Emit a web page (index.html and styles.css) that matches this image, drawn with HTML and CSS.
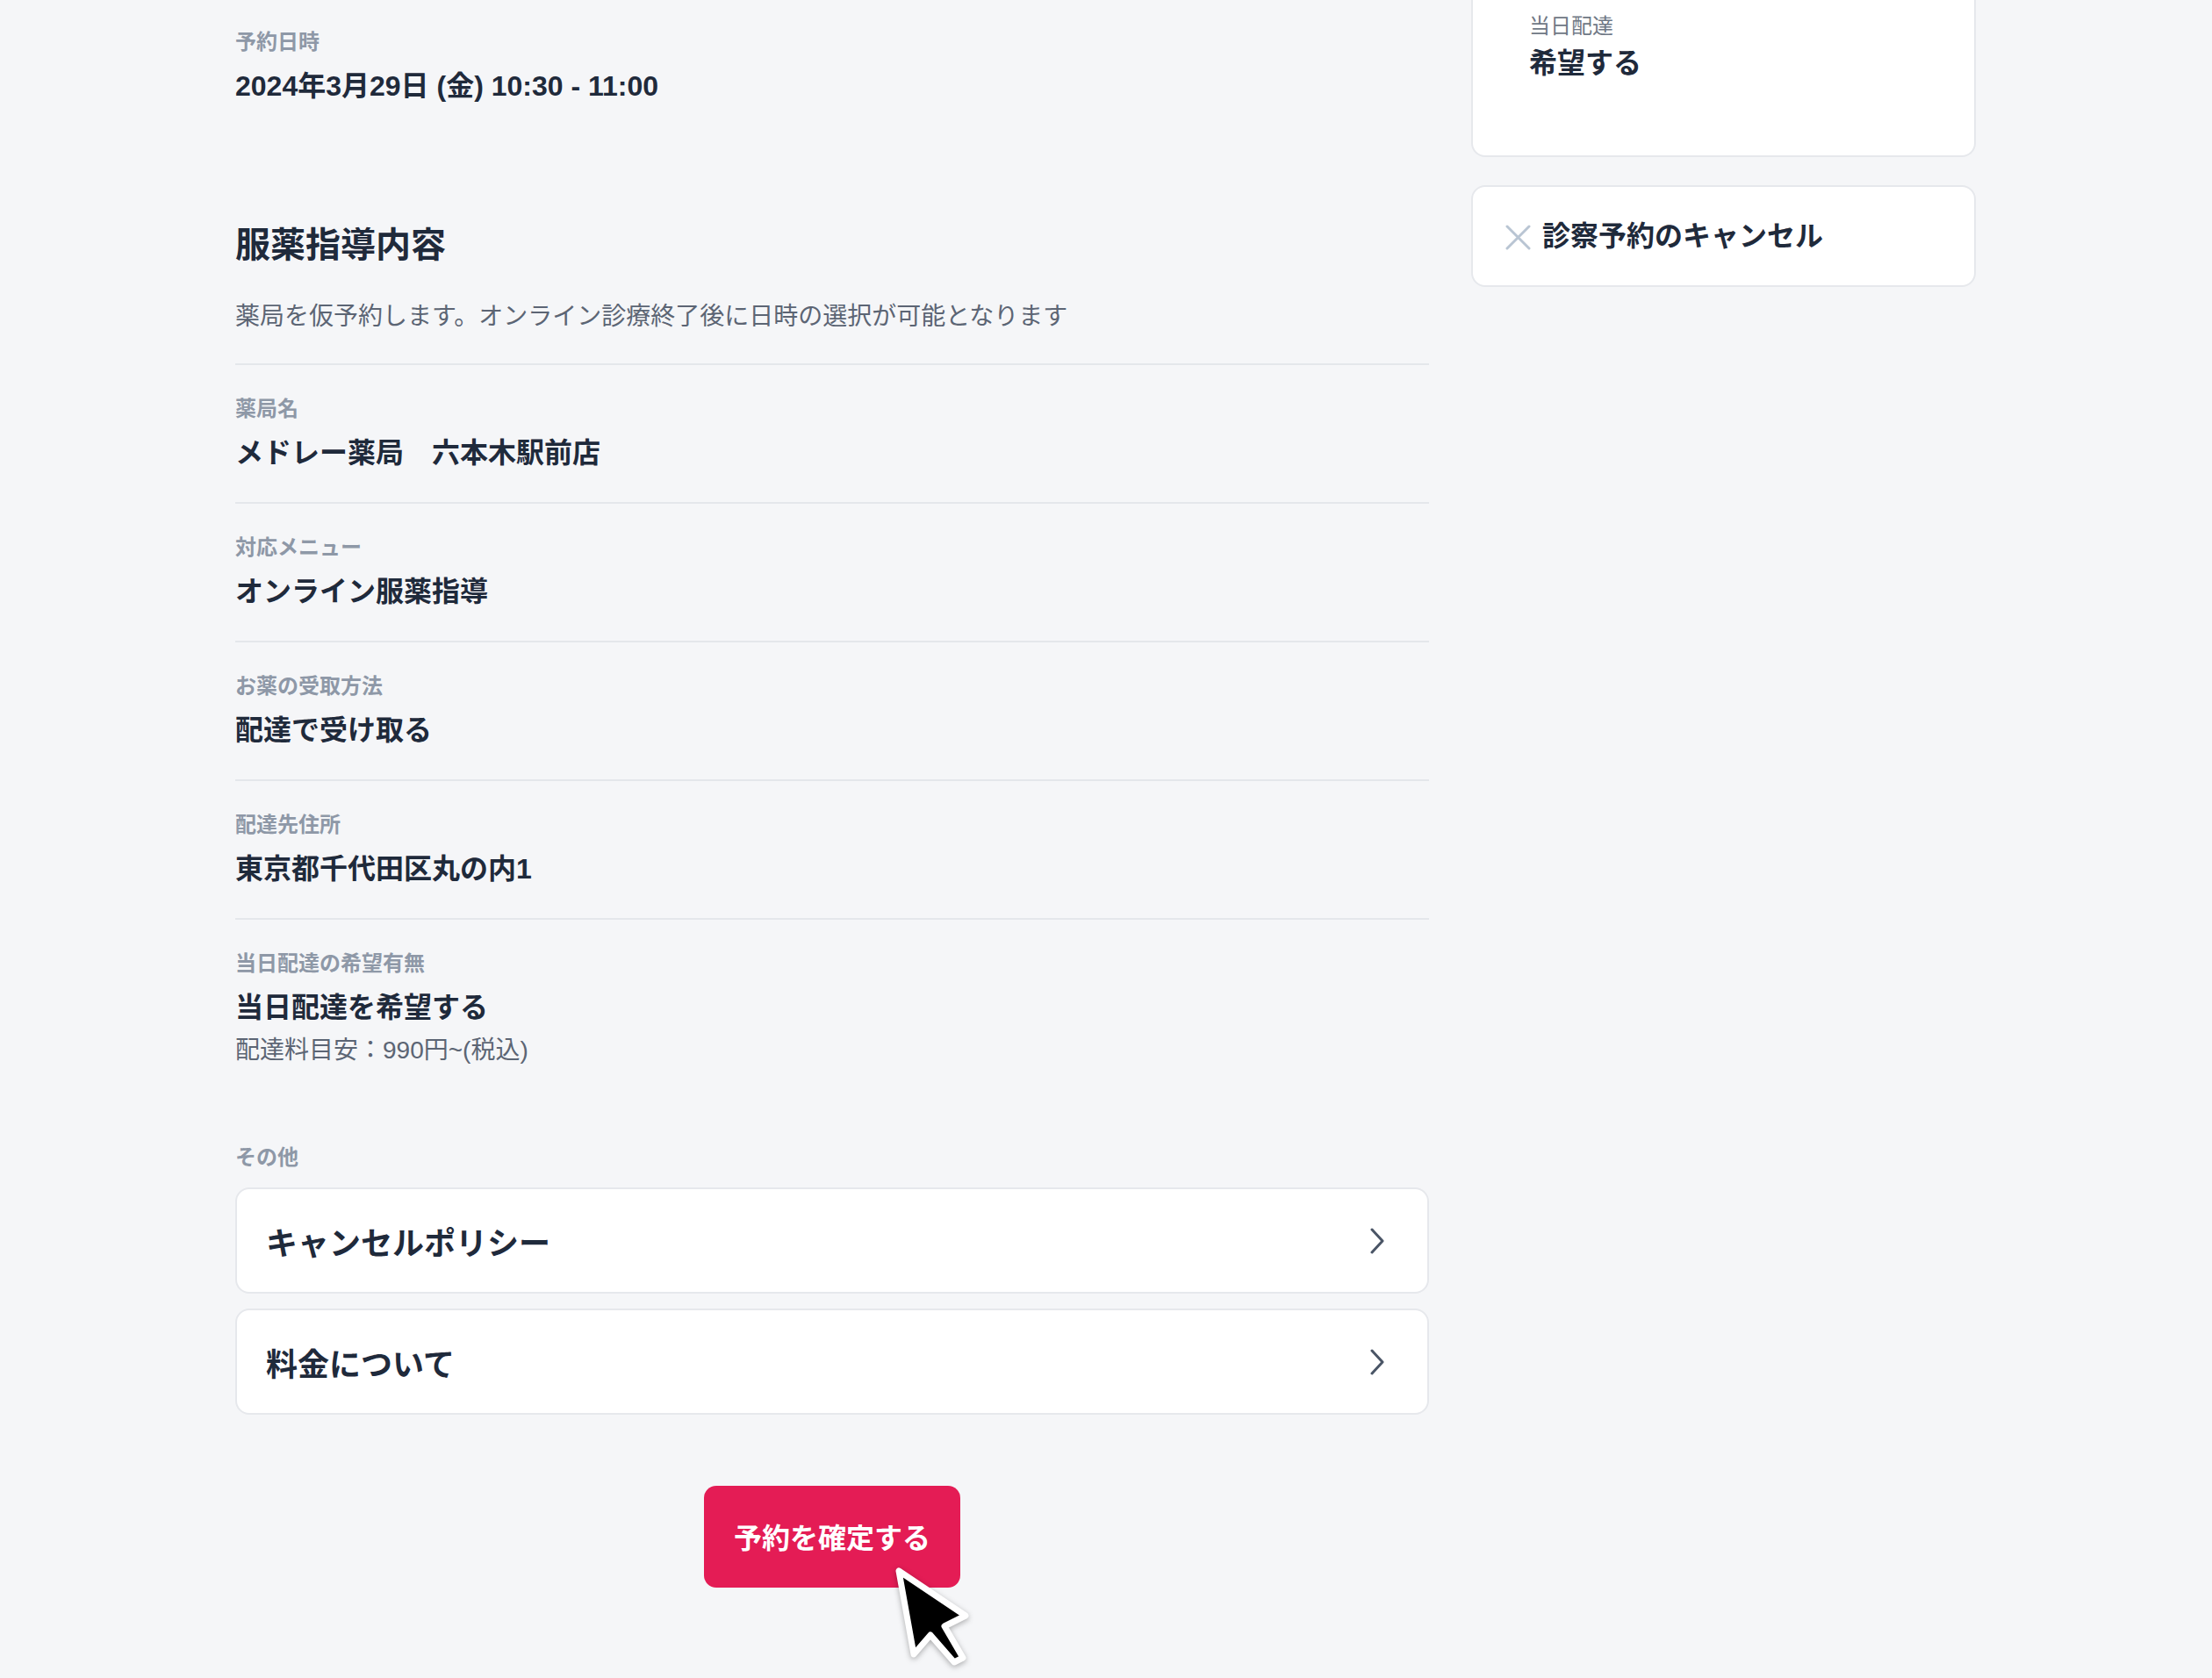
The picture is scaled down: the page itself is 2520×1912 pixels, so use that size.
FILE: index.html
```html
<!DOCTYPE html>
<html lang="ja">
<head>
<meta charset="utf-8">
<title>予約内容の確認</title>
<link rel="stylesheet" href="styles.css">
</head>
<body>
<div class="page">
  <main class="main">
    <div class="field field-top">
      <div class="label">予約日時</div>
      <div class="value">2024年3月29日 (金) 10:30 - 11:00</div>
    </div>

    <h2 class="heading">服薬指導内容</h2>
    <p class="desc">薬局を仮予約します。オンライン診療終了後に日時の選択が可能となります</p>

    <div class="row">
      <div class="label">薬局名</div>
      <div class="value">メドレー薬局　六本木駅前店</div>
    </div>
    <div class="row">
      <div class="label">対応メニュー</div>
      <div class="value">オンライン服薬指導</div>
    </div>
    <div class="row">
      <div class="label">お薬の受取方法</div>
      <div class="value">配達で受け取る</div>
    </div>
    <div class="row">
      <div class="label">配達先住所</div>
      <div class="value">東京都千代田区丸の内1</div>
    </div>
    <div class="row row-last">
      <div class="label">当日配達の希望有無</div>
      <div class="value">当日配達を希望する</div>
      <div class="note">配達料目安：990円~(税込)</div>
    </div>

    <section class="other">
      <div class="label">その他</div>
      <div class="links">
        <a class="link-card">
          <span>キャンセルポリシー</span>
          <svg class="chev" width="16" height="30" viewBox="0 0 16 30"><path d="M2 2 L14 15 L2 28" fill="none" stroke="#4a5566" stroke-width="3" stroke-linecap="round" stroke-linejoin="round"/></svg>
        </a>
        <a class="link-card">
          <span>料金について</span>
          <svg class="chev" width="16" height="30" viewBox="0 0 16 30"><path d="M2 2 L14 15 L2 28" fill="none" stroke="#4a5566" stroke-width="3" stroke-linecap="round" stroke-linejoin="round"/></svg>
        </a>
      </div>
    </section>

    <div class="actions">
      <div class="btn-wrap">
        <button class="confirm">予約を確定する</button>
        <svg class="cursor" width="130" height="152" viewBox="0 0 130 152">
          <polygon points="24,29 41,124 60,102 87,133 97,128 76,92 100,80" fill="#000" stroke="#fff" stroke-width="7" stroke-linejoin="round"/>
        </svg>
      </div>
    </div>
  </main>

  <aside class="side">
    <div class="side-card side-card-top">
      <div class="side-label">当日配達</div>
      <div class="side-value">希望する</div>
    </div>
    <div class="side-card side-cancel">
      <svg class="xicon" width="29" height="29" viewBox="0 0 29 29"><path d="M2 2 L27 27 M27 2 L2 27" stroke="#b9c5d3" stroke-width="3" stroke-linecap="round"/></svg>
      <span>診察予約のキャンセル</span>
    </div>
  </aside>
</div>
</body>
</html>
```

FILE: styles.css
```css
html, body {
  margin: 0;
  padding: 0;
  background: #f5f6f8;
}
body {
  font-family: "Liberation Sans", "Noto Sans CJK JP", "Noto Sans", sans-serif;
  color: #1f2a3b;
  min-height: 1912px;
}
.page {
  display: flex;
  gap: 48px;
  padding-left: 268px;
}
.main {
  width: 1360px;
  padding-top: 30px;
}
.label {
  font-size: 24px;
  line-height: 36px;
  font-weight: 700;
  color: #8e98a7;
}
.value {
  font-size: 32px;
  line-height: 48px;
  font-weight: 700;
  margin-top: 8px;
  color: #1f2a3b;
}
.heading {
  margin: 127px 0 0;
  font-size: 40px;
  line-height: 60px;
  font-weight: 700;
}
.desc {
  margin: 31px 0 0;
  font-size: 28px;
  line-height: 42px;
  color: #5c6574;
  padding-bottom: 32px;
  border-bottom: 2px solid #e4e7eb;
}
.row {
  padding: 32px 0;
  border-bottom: 2px solid #e4e7eb;
}
.row-last {
  border-bottom: none;
  padding-bottom: 0;
}
.note {
  margin-top: 4px;
  font-size: 28px;
  line-height: 42px;
  color: #5c6574;
}
.other {
  margin-top: 83px;
}
.links {
  margin-top: 16px;
  display: flex;
  flex-direction: column;
  gap: 17px;
}
.link-card {
  display: flex;
  align-items: center;
  justify-content: space-between;
  height: 117px;
  padding: 0 49px 0 33px;
  background: #fff;
  border: 2px solid #e6e8ec;
  border-radius: 16px;
  font-size: 36px;
  font-weight: 700;
  color: #1f2a3b;
}
.actions {
  margin-top: 81px;
  display: flex;
  justify-content: center;
}
.btn-wrap {
  position: relative;
}
.confirm {
  display: block;
  width: 292px;
  height: 116px;
  border: none;
  border-radius: 14px;
  background: #e41c55;
  color: #fff;
  font-family: "Liberation Sans", "Noto Sans CJK JP", "Noto Sans", sans-serif;
  font-size: 32px;
  font-weight: 700;
  padding: 0 0 2px;
}
.cursor {
  position: absolute;
  left: 198px;
  top: 68px;
  filter: drop-shadow(0 2px 3px rgba(0,0,0,0.3));
}
.side {
  width: 575px;
}
.side-card {
  background: #fff;
  border: 2px solid #e6e8ec;
  border-radius: 16px;
}
.side-card-top {
  border-top: none;
  border-radius: 0 0 16px 16px;
  padding: 12px 32px 81px 64px;
}
.side-label {
  font-size: 24px;
  line-height: 36px;
  color: #6f7885;
}
.side-value {
  font-size: 32px;
  line-height: 48px;
  font-weight: 700;
}
.side-cancel {
  margin-top: 32px;
  display: flex;
  align-items: center;
  gap: 13px;
  padding: 32px 37px 32px;
  font-size: 32px;
  line-height: 48px;
  font-weight: 700;
}
.xicon {
  flex: none;
  margin-top: 2px;
}
```
